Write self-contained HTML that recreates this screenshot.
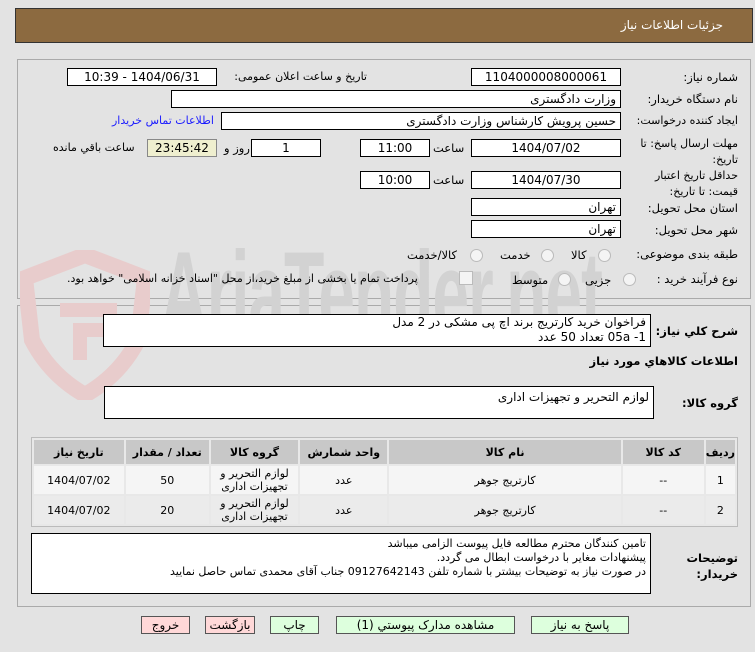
<!DOCTYPE html>
<html><head><meta charset="utf-8"><style>
body{margin:0;width:755px;height:652px;background:#e3e3e3;position:relative;overflow:hidden;font-family:"DejaVu Sans",sans-serif;font-size:11px;color:#000}
.a{position:absolute}
.box{position:absolute;background:#fff;border:1px solid #000;box-sizing:border-box;direction:rtl;font-size:12px;line-height:16px;padding:0 4px;white-space:nowrap;overflow:hidden}
.c{text-align:center}
.lbl{position:absolute;direction:rtl;font-size:11.5px;white-space:nowrap}
.radio{position:absolute;width:11px;height:11px;border:1px solid #bbb;border-radius:50%;background:#f4f4f4}
.btn{position:absolute;top:616px;height:18px;border:1px solid #555;box-sizing:border-box;text-align:center;font-size:12px;line-height:16px;direction:rtl}
table{border-collapse:separate;border-spacing:2px}
td{text-align:center;font-size:11px;direction:rtl;padding:0}
</style></head><body>
<div class="a" style="left:15px;top:8px;width:738px;height:35px;background:#8c6a40;border:1px solid #333;box-sizing:border-box"></div>
<div class="lbl" style="right:32px;top:18px;color:#fff;font-size:12px">جزئیات اطلاعات نیاز</div>

<div class="a" style="left:17px;top:59px;width:734px;height:240px;border:1px solid #aaa;box-sizing:border-box"></div>
<div class="a" style="left:17px;top:305px;width:734px;height:302px;border:1px solid #aaa;box-sizing:border-box"></div>

<!-- watermark -->
<div class="a" style="left:160px;top:225px;font-size:120px;font-weight:bold;color:#d2d2d2;transform:scaleX(0.55);transform-origin:left top;font-family:'Liberation Sans',sans-serif;letter-spacing:-2px;white-space:nowrap">AriaTender.net</div>
<svg class="a" style="left:20px;top:250px" width="130" height="150"><path d="M65 5 L125 28 L118 90 Q100 125 65 145 Q30 125 12 90 L5 28 Z" fill="none" stroke="#e8cccc" stroke-width="16"/><path d="M40 60 L90 60 L90 80 L60 80 L60 110" fill="none" stroke="#e8cccc" stroke-width="14"/></svg>

<div class="lbl" style="right:17px;top:70px">شماره نیاز:</div>
<div class="box c" style="left:471px;top:68px;width:150px;height:18px">1104000008000061</div>
<div class="lbl" style="left:222px;top:70px;width:145px;text-align:right;font-size:11px">تاریخ و ساعت اعلان عمومی:</div>
<div class="box c" style="left:67px;top:68px;width:150px;height:18px">1404/06/31 - 10:39</div>

<div class="lbl" style="right:17px;top:92px">نام دستگاه خریدار:</div>
<div class="box" style="left:171px;top:90px;width:450px;height:18px">وزارت دادگستری</div>

<div class="lbl" style="right:17px;top:114px;font-size:11px">ایجاد کننده درخواست:</div>
<div class="box" style="left:221px;top:112px;width:400px;height:18px">حسین پرویش کارشناس وزارت دادگستری</div>
<div class="lbl" style="left:112px;top:114px;color:#1a1aff;font-size:11px">اطلاعات تماس خریدار</div>

<div class="lbl" style="right:17px;top:136px;line-height:16px;text-align:right;font-size:11px">مهلت ارسال پاسخ: تا<br>تاریخ:</div>
<div class="box c" style="left:471px;top:139px;width:150px;height:18px">1404/07/02</div>
<div class="lbl" style="left:433px;top:141px">ساعت</div>
<div class="box c" style="left:360px;top:139px;width:70px;height:18px">11:00</div>
<div class="box c" style="left:251px;top:139px;width:70px;height:18px">1</div>
<div class="lbl" style="left:224px;top:141px">روز و</div>
<div class="box c" style="left:147px;top:139px;width:70px;height:18px;background:#efefcf;border-color:#888">23:45:42</div>
<div class="lbl" style="left:53px;top:141px;font-size:11px">ساعت باقي مانده</div>

<div class="lbl" style="right:17px;top:168px;line-height:16px;text-align:right;font-size:11px">حداقل تاریخ اعتبار<br>قیمت: تا تاریخ:</div>
<div class="box c" style="left:471px;top:171px;width:150px;height:18px">1404/07/30</div>
<div class="lbl" style="left:433px;top:173px">ساعت</div>
<div class="box c" style="left:360px;top:171px;width:70px;height:18px">10:00</div>

<div class="lbl" style="right:17px;top:201px">استان محل تحویل:</div>
<div class="box" style="left:471px;top:198px;width:150px;height:18px">تهران</div>
<div class="lbl" style="right:17px;top:223px">شهر محل تحویل:</div>
<div class="box" style="left:471px;top:220px;width:150px;height:18px">تهران</div>

<div class="lbl" style="right:17px;top:247px">طبقه بندی موضوعی:</div>
<div class="radio" style="left:598px;top:249px"></div><div class="lbl" style="left:571px;top:248px">کالا</div>
<div class="radio" style="left:541px;top:249px"></div><div class="lbl" style="left:500px;top:248px">خدمت</div>
<div class="radio" style="left:470px;top:249px"></div><div class="lbl" style="left:407px;top:248px">کالا/خدمت</div>

<div class="lbl" style="right:17px;top:272px">نوع فرآیند خرید :</div>
<div class="radio" style="left:623px;top:273px"></div><div class="lbl" style="left:585px;top:273px">جزیی</div>
<div class="radio" style="left:558px;top:273px"></div><div class="lbl" style="left:512px;top:273px">متوسط</div>
<div class="a" style="left:459px;top:271px;width:12px;height:12px;border:1px solid #bbb;background:#f4f4f4"></div>
<div class="lbl" style="left:67px;top:272px;font-size:11px">پرداخت تمام یا بخشی از مبلغ خرید،از محل "اسناد خزانه اسلامی" خواهد بود.</div>

<div class="lbl" style="right:17px;top:324px;font-weight:bold">شرح کلي نیاز:</div>
<div class="box" style="left:103px;top:314px;width:548px;height:33px;line-height:15px;font-size:12px">فراخوان خرید کارتریج برند اچ پی  مشکی در 2 مدل<br>1- 05a تعداد 50 عدد</div>
<div class="lbl" style="right:17px;top:354px;font-weight:bold">اطلاعات کالاهاي مورد نیاز</div>

<div class="lbl" style="right:17px;top:396px;font-weight:bold">گروه کالا:</div>
<div class="box" style="left:104px;top:386px;width:550px;height:33px;padding-top:2px">لوازم التحریر و تجهیزات اداری</div>

<div class="a" style="left:31px;top:437px;width:707px;height:90px;border:1px solid #bbb;box-sizing:border-box;background:#e8e8e8">
<table style="width:705px;direction:ltr">
<tr style="background:#c8c8c8;height:24px"><td style="width:90px"><b>تاریخ نیاز</b></td><td style="width:84px"><b>تعداد / مقدار</b></td><td style="width:88px"><b>گروه کالا</b></td><td style="width:88px"><b>واحد شمارش</b></td><td style="width:234px"><b>نام کالا</b></td><td style="width:82px"><b>کد کالا</b></td><td><b>ردیف</b></td></tr>
<tr style="background:#f5f5f5;height:28px"><td>1404/07/02</td><td>50</td><td style="line-height:13px">لوازم التحریر و<br>تجهیزات اداری</td><td>عدد</td><td>کارتریج جوهر</td><td>--</td><td>1</td></tr>
<tr style="background:#ebebeb;height:28px"><td>1404/07/02</td><td>20</td><td style="line-height:13px">لوازم التحریر و<br>تجهیزات اداری</td><td>عدد</td><td>کارتریج جوهر</td><td>--</td><td>2</td></tr>
</table></div>

<div class="lbl" style="right:17px;top:550px;font-weight:bold;line-height:16px;text-align:right">توضیحات<br>خریدار:</div>
<div class="box" style="left:31px;top:533px;width:620px;height:61px;line-height:14px;padding-top:3px;font-size:11px">تامین کنندگان محترم مطالعه فایل پیوست الزامی میباشد<br>پیشنهادات مغایر با درخواست  ابطال می گردد.<br>در صورت نیاز به توضیحات بیشتر با شماره تلفن 09127642143 جناب آقای محمدی تماس حاصل نمایید</div>

<div class="btn" style="left:141px;width:49px;background:#ffd8d8">خروج</div>
<div class="btn" style="left:205px;width:50px;background:#ffd8d8">بازگشت</div>
<div class="btn" style="left:270px;width:49px;background:#ddffdd">چاپ</div>
<div class="btn" style="left:336px;width:179px;background:#ddffdd">مشاهده مدارک پیوستي (1)</div>
<div class="btn" style="left:531px;width:98px;background:#ddffdd">پاسخ به نیاز</div>
</body></html>
